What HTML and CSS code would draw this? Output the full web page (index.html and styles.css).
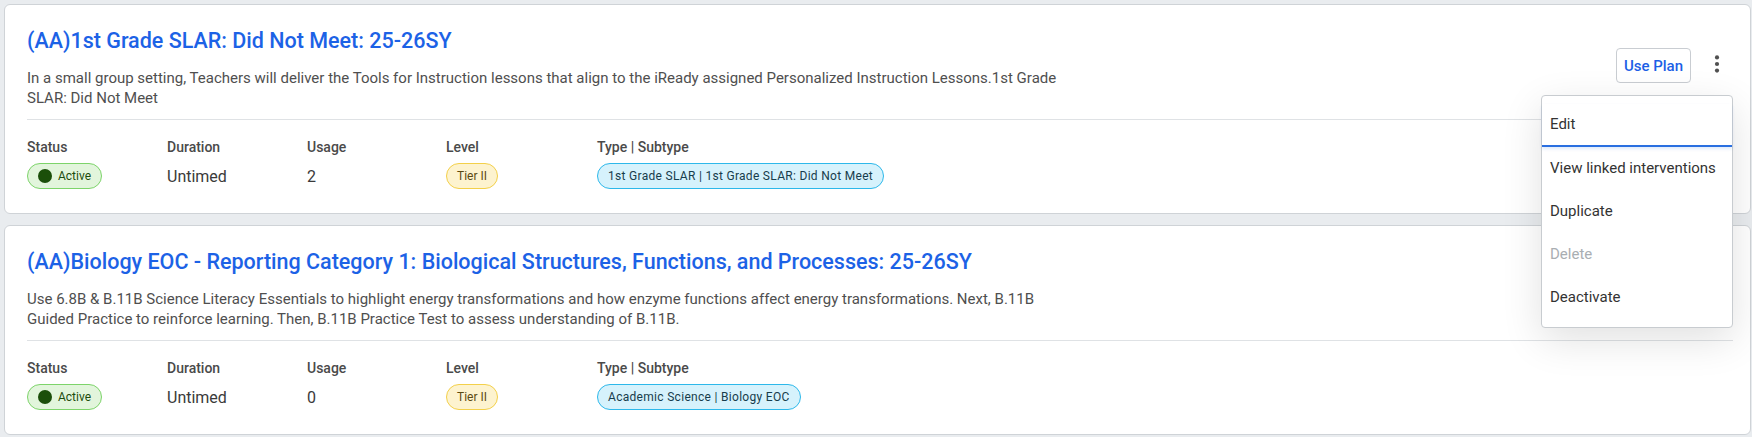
FILE: index.html
```html
<!DOCTYPE html>
<html lang="en">
<head>
<meta charset="utf-8">
<title>Plans</title>
<link rel="stylesheet" href="styles.css">
</head>
<body>
<div class="list">
  <div class="card">
    <div class="card-head">
      <div class="card-main">
        <h2 class="title">(AA)1st Grade SLAR: Did Not Meet: 25-26SY</h2>
        <p class="desc">In a small group setting, Teachers will deliver the Tools for Instruction lessons that align to the iReady assigned Personalized Instruction Lessons.1st Grade SLAR: Did Not Meet</p>
      </div>
      <div class="actions">
        <button class="btn-use">Use Plan</button>
        <button class="kebab" aria-label="More"><svg width="24" height="24" viewBox="0 0 24 24"><circle cx="12" cy="5.4" r="2.1"/><circle cx="12" cy="12" r="2.1"/><circle cx="12" cy="18.6" r="2.1"/></svg></button>
        <ul class="menu">
          <li class="menu-item focused">Edit</li>
          <li class="menu-item">View linked interventions</li>
          <li class="menu-item">Duplicate</li>
          <li class="menu-item disabled">Delete</li>
          <li class="menu-item">Deactivate</li>
        </ul>
      </div>
    </div>
    <div class="divider"></div>
    <div class="meta">
      <div class="label">Status</div>
      <div class="label">Duration</div>
      <div class="label">Usage</div>
      <div class="label">Level</div>
      <div class="label">Type | Subtype</div>
      <div class="value"><span class="pill pill-active"><span class="dot"></span>Active</span></div>
      <div class="value">Untimed</div>
      <div class="value">2</div>
      <div class="value"><span class="pill pill-tier">Tier II</span></div>
      <div class="value"><span class="pill pill-type">1st Grade SLAR | 1st Grade SLAR: Did Not Meet</span></div>
    </div>
  </div>
  <div class="card">
    <div class="card-head">
      <div class="card-main">
        <h2 class="title">(AA)Biology EOC - Reporting Category 1: Biological Structures, Functions, and Processes: 25-26SY</h2>
        <p class="desc">Use 6.8B &amp; B.11B Science Literacy Essentials to highlight energy transformations and how enzyme functions affect energy transformations. Next, B.11B Guided Practice to reinforce learning. Then, B.11B Practice Test to assess understanding of B.11B.</p>
      </div>
      <div class="actions">
        <button class="btn-use">Use Plan</button>
        <button class="kebab" aria-label="More"><svg width="24" height="24" viewBox="0 0 24 24"><circle cx="12" cy="5.4" r="2.1"/><circle cx="12" cy="12" r="2.1"/><circle cx="12" cy="18.6" r="2.1"/></svg></button>
      </div>
    </div>
    <div class="divider"></div>
    <div class="meta">
      <div class="label">Status</div>
      <div class="label">Duration</div>
      <div class="label">Usage</div>
      <div class="label">Level</div>
      <div class="label">Type | Subtype</div>
      <div class="value"><span class="pill pill-active"><span class="dot"></span>Active</span></div>
      <div class="value">Untimed</div>
      <div class="value">0</div>
      <div class="value"><span class="pill pill-tier">Tier II</span></div>
      <div class="value"><span class="pill pill-type">Academic Science | Biology EOC</span></div>
    </div>
  </div>
</div>
</body>
</html>
```

FILE: styles.css
```css
* { box-sizing: border-box; }
body {
  margin: 0;
  background: #e9ecef;
  font-family: Roboto, "Noto Sans", Arial, sans-serif;
  color: #333;
}
.list {
  padding: 4px 1px 0 4px;
  display: flex;
  flex-direction: column;
  gap: 11px;
}
.card {
  background: #fff;
  border: 1px solid #cfd3d7;
  border-radius: 6px;
  padding: 22px 17px 24px 22px;
}
.card-head {
  display: flex;
  justify-content: space-between;
  align-items: flex-start;
}
.card-main { flex: 1; min-width: 0; }
.title {
  margin: 0;
  font-size: 21.5px;
  line-height: 28px;
  font-weight: 500;
  color: #1c62e6;
}
.desc {
  margin: 13px 0 0;
  max-width: 1050px;
  font-size: 15px;
  line-height: 20px;
  color: #4f4f4f;
}
.actions {
  position: relative;
  margin-top: 21px;
  display: flex;
  align-items: flex-start;
  gap: 10px;
}
.btn-use {
  height: 35px;
  width: 75px;
  padding: 0;
  border: 1px solid #c9cdd2;
  border-radius: 4px;
  background: #fff;
  color: #1c5fe6;
  font-family: inherit;
  font-size: 15px;
  font-weight: 500;
}
.kebab {
  width: 32px;
  height: 32px;
  padding: 0;
  border: 0;
  background: transparent;
  display: flex;
  align-items: center;
  justify-content: center;
}
.kebab svg { fill: #505050; }
.menu {
  position: absolute;
  z-index: 5;
  top: 47px;
  right: 0;
  width: 192px;
  margin: 0;
  padding: 8px 0;
  list-style: none;
  background: #fff;
  border: 1px solid #c8ccd0;
  border-radius: 4px;
  box-shadow: 0 12px 40px rgba(0, 0, 0, 0.12);
}
.menu-item {
  height: 43px;
  line-height: 43px;
  padding: 0 8px;
  font-size: 15px;
  color: #333;
  white-space: nowrap;
}
.menu-item.focused {
  border-bottom: 2px solid #2a6fe0;
  box-shadow: 0 2px 3px rgba(42, 111, 224, 0.15);
  line-height: 41px;
}
.menu-item.disabled { color: #a9aeb2; }
.divider {
  margin-top: 11px;
  height: 1px;
  background: #dfe2e5;
}
.meta {
  margin-top: 17px;
  display: grid;
  grid-template-columns: 140px 140px 139px 151px 1fr;
  grid-template-rows: 20px 26px;
  row-gap: 6px;
}
.label {
  font-size: 14px;
  line-height: 20px;
  font-weight: 500;
  color: #4a4a4a;
}
.value {
  display: flex;
  align-items: center;
  font-size: 16px;
  color: #3a3a3a;
}
.pill {
  display: inline-flex;
  align-items: center;
  height: 26px;
  padding: 0 10px;
  border-radius: 13px;
  font-size: 12px;
  border: 1px solid;
}
.pill-active {
  background: #e2f5dc;
  border-color: #7dd46a;
  color: #1d4d0e;
  gap: 6px;
}
.dot {
  width: 14px;
  height: 14px;
  border-radius: 50%;
  background: #1b4f0a;
}
.pill-tier {
  background: #fdf3cf;
  border-color: #f3d04a;
  color: #5c4a12;
}
.pill-type {
  background: #d6f2fc;
  border-color: #2db8ea;
  color: #173d4c;
  letter-spacing: 0.3px;
}
```
